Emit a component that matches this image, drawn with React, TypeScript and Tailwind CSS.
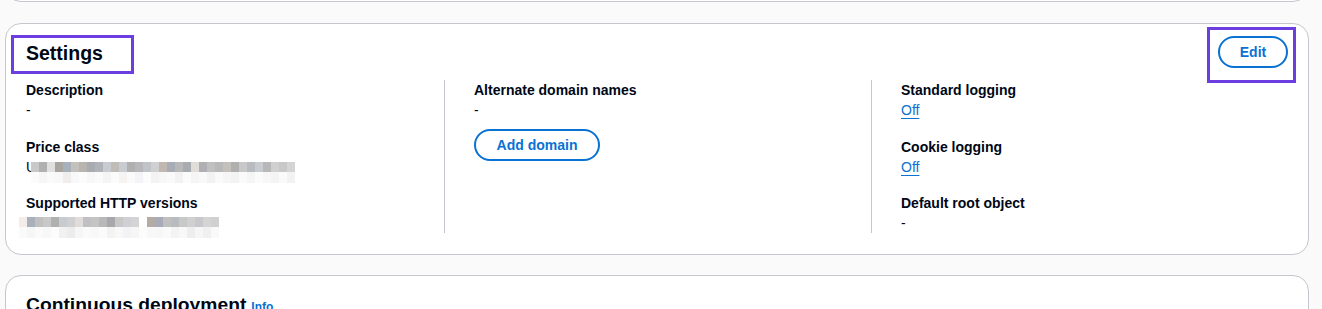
import React from 'react';

const priceTop = ['#c8c8c8', '#b0b0b0', '#e0e0e0', '#a8a4a0', '#a8b0bc', '#c4c0bc', '#b8b4b0', '#a8acb0', '#b0b4b8', '#c8ccd0', '#c0bcb8', '#c8ccd0', '#b0b0b0', '#b8b8bc', '#c0c4c8', '#d0d0d0', '#c0b8b0', '#a8acb4', '#b8b8b8', '#a8acb0', '#e0dcd8', '#b0b0b4', '#c0c0c0', '#b8b8b8', '#c4c0bc', '#b0b0b0', '#c8c8c8', '#b8bcc0', '#c8ccd0', '#b8b8b8', '#d0d0d0', '#c8c8c8', '#d4d4d4'];
const priceBottom = ['#fbfbfb', '#f6f6f6', '#fafafa', '#f8f8f8', '#f0eeec', '#f8f8fa', '#fcfcfc', '#f7f7f7', '#fafafa', '#f4f4f4', '#fbfbfb', '#f6f4f2', '#fafafa', '#f4f4f6', '#fcfcfc', '#f3f3f3', '#f7f7f7', '#fafafa', '#f2f2f2', '#fbfbfb', '#f5f5f5', '#f9f9f9', '#f2f2f2', '#fafafa', '#f6f6f6', '#f3f3f3', '#fafafa', '#f5f5f5', '#fbfbfb', '#f7f7f7', '#f4f4f4', '#fafafa', '#f2f2f2'];
const httpTop = ['#f4ece8', '#a8b0bc', '#c0c0c0', '#c8c8c8', '#b0b0b0', '#c8ccd0', '#d0d0d0', '#e0dcdc', '#c0c0c4', '#c4c4c4', '#b8b8b8', '#a8a8ac', '#c8c8c8', '#d0d0d4', '#d4d4d4', '#ffffff', '#b4aca4', '#a8acb8', '#c0c0c0', '#b8bcc0', '#c8c8c8', '#d0d0d0', '#c8c8cc', '#d4d4d4', '#d0d0d0'];
const httpBottom = ['#fafafa', '#f4f6f8', '#fafafa', '#f7f7f7', '#fcfcfc', '#f1f1f1', '#ececec', '#f6f6f6', '#fafafa', '#f8f8f8', '#fbfbfb', '#f5f3f1', '#f8f8f8', '#f3f3f5', '#f6f6f6', '#fcfcfc', '#f8f8f8', '#f7f7f7', '#fafafa', '#f3f3f3', '#f8f8f8', '#eeeeee', '#f6f6f6', '#f0f0f0', '#f9f9f9'];

// pixelated (blurred) value, drawn as blocks
function Blurred({ top, bottom, lead, offset = 5 }: { top: string[]; bottom: string[]; lead?: boolean; offset?: number }) {
  const w = top.length * 8;
  return (
    <div className="relative h-5">
      {lead && <span className="absolute left-0 top-0 text-sm leading-5 text-[#000716]">U</span>}
      <svg width={w} height={21} className="absolute top-0" style={{ left: lead ? 5 : -7, top: offset }}>
        {top.map((c, i) => (
          <rect key={'t' + i} x={i * 8} y={0} width={8} height={10} fill={c} />
        ))}
        {bottom.map((c, i) => (
          <rect key={'b' + i} x={i * 8} y={10} width={8} height={11} fill={c} />
        ))}
      </svg>
    </div>
  );
}

function Item({ label, children }: { label: string; children: React.ReactNode }) {
  return (
    <div className="flex flex-col">
      <div className="text-sm leading-5 font-bold text-[#000716]">{label}</div>
      <div className="text-sm leading-5 text-[#000716]">{children}</div>
    </div>
  );
}

function OffLink() {
  return <a className="text-sm leading-5 text-[#0972d3] underline underline-offset-[3px] cursor-pointer">Off</a>;
}

export default function App() {
  return (
    <div className="h-[309px] overflow-hidden bg-[#fafafa] pl-[5px] pr-[13px] flex flex-col gap-5" style={{ fontFamily: '"Liberation Sans", Arial, sans-serif' }}>
      {/* bottom edge of the card above */}
      <div className="h-[2px] mb-px flex flex-col justify-end overflow-hidden shrink-0">
        <div className="h-10 shrink-0 bg-white border border-[#c6c6cd] rounded-2xl" />
      </div>

      <section className="shrink-0 bg-white border border-[#c6c6cd] rounded-2xl px-5 pt-3 pb-[21px]">
        <div className="flex items-start justify-between h-[44px]">
          <div className="relative mt-[6px]">
            <h2 className="text-[19.5px] leading-[22px] font-bold text-[#000716]">Settings</h2>
            <div className="absolute left-[-15px] top-[-7px] w-[123px] h-[39px] border-[3px] border-[#6c3ee0] pointer-events-none" />
          </div>
          <div className="relative">
            <button className="h-8 w-[70px] rounded-full border-2 border-[#0972d3] text-[#0972d3] text-sm font-bold">Edit</button>
            <div className="absolute left-[-11px] top-[-9px] w-[89px] h-[56px] border-[3px] border-[#6c3ee0] pointer-events-none" />
          </div>
        </div>

        <div className="grid grid-cols-[418px_427px_1fr]">
          <div className="flex flex-col gap-[16.5px]">
            <Item label="Description">-</Item>
            <Item label="Price class">
              <Blurred top={priceTop} bottom={priceBottom} lead />
            </Item>
            <Item label="Supported HTTP versions">
              <Blurred top={httpTop} bottom={httpBottom} offset={4} />
            </Item>
          </div>
          <div className="flex flex-col border-l border-[#c6c6cd] pl-[29px]">
            <Item label="Alternate domain names">-</Item>
            <div>
              <button className="mt-[9px] h-8 w-[126px] rounded-full border-2 border-[#0972d3] text-[#0972d3] text-sm font-bold">Add domain</button>
            </div>
          </div>
          <div className="flex flex-col gap-[16.5px] border-l border-[#c6c6cd] pl-[29px]">
            <Item label="Standard logging"><OffLink /></Item>
            <Item label="Cookie logging"><OffLink /></Item>
            <Item label="Default root object">-</Item>
          </div>
        </div>
      </section>

      <section className="shrink-0 bg-white border border-[#c6c6cd] rounded-2xl px-5 pt-[17px] pb-5">
        <div className="flex items-baseline gap-[5px]">
          <h2 className="text-[19.25px] leading-6 font-bold text-[#000716]">Continuous deployment</h2>
          <a className="text-xs font-bold text-[#0972d3] cursor-pointer">Info</a>
        </div>
        <div className="h-16" />
      </section>
    </div>
  );
}
